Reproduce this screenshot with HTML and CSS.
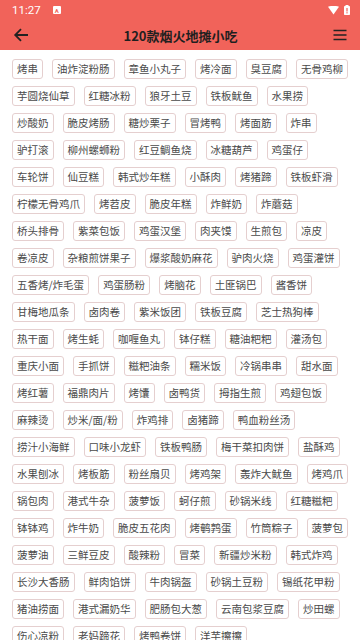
FILE: index.html
```html
<!DOCTYPE html>
<html lang="zh-CN">
<head>
<meta charset="utf-8">
<meta name="viewport" content="width=device-width, initial-scale=1">
<title>120款烟火地摊小吃</title>
<link rel="stylesheet" href="styles.css">
</head>
<body>
<header class="appbar">
  <div class="status">
    <span class="time">11:27</span>
    <span class="notif">A</span>
    <span class="spacer"></span>
    <svg class="wifi" width="11" height="9" viewBox="0 0 11 9"><path d="M0 0.8 Q5.5 -1.2 11 0.8 L5.5 8.5 Z" fill="#fff"/></svg>
    <svg class="batt" width="6" height="10" viewBox="0 0 6 10"><rect x="1.5" y="0" width="3" height="1.2" fill="#fff"/><rect x="0" y="1" width="6" height="9" rx="0.8" fill="#fff"/><rect x="2.4" y="3" width="1.2" height="3.5" fill="#f1635a"/><rect x="2.4" y="7.2" width="1.2" height="1.2" fill="#f1635a"/></svg>
  </div>
  <div class="toolbar">
    <svg class="icon" width="16" height="16" viewBox="0 0 16 16"><path d="M15 8H2.5M8 2.2L2.2 8 8 13.8" stroke="#222" stroke-width="1.8" fill="none"/></svg>
    <h1 class="title">120款烟火地摊小吃</h1>
    <svg class="icon" width="16" height="16" viewBox="0 0 16 16"><path d="M1.5 3.5H14.5M1.5 8H14.5M1.5 12.5H14.5" stroke="#222" stroke-width="1.5" fill="none"/></svg>
  </div>
</header>
<main class="tags" id="tags"></main>
<script src="app.js"></script>
</body>
</html>
```
FILE: styles.css
```css
* { box-sizing: border-box; }
html, body { margin: 0; padding: 0; background: #fff; }
body { font-family: "Noto Sans CJK SC", "Noto Sans", Roboto, sans-serif; }
.appbar { background: #f1635a; color: #fff; }
.status { height: 20px; display: flex; align-items: center; padding: 0 10px 0 12px; gap: 8px; }
.time { font-family: Roboto, "Noto Sans", sans-serif; font-size: 11.5px; color: #fff; }
.notif { width: 8px; height: 8px; background: #fff; color: #f1635a; font-size: 6px; font-weight: bold; font-family: Roboto, sans-serif; display: flex; align-items: center; justify-content: center; border-radius: 1px; margin-left: 4px; }
.spacer { flex: 1; }
.wifi { margin-right: -3px; }
.toolbar { height: 30px; display: flex; align-items: center; padding: 0 12px 0 13px; }
.icon { flex: none; }
.title { flex: 1; margin: 0; text-align: center; font-size: 13px; font-weight: bold; color: #1f1f1f; line-height: 1; }
.tags { display: flex; flex-wrap: wrap; gap: 7px 9px; padding: 9px 10px 12px 12px; }
.tag { height: 20px; padding: 0 4px; border: 1px solid #e5cfcf; border-radius: 3px; font-size: 10.5px; line-height: 18px; color: #4a4a4a; white-space: nowrap; }
```
FILE: app.js
```js
var rows = [
"烤串,油炸淀粉肠,章鱼小丸子,烤冷面,臭豆腐,无骨鸡柳",
"芋圆烧仙草,红糖冰粉,狼牙土豆,铁板鱿鱼,水果捞",
"炒酸奶,脆皮烤肠,糖炒栗子,冒烤鸭,烤面筋,炸串",
"驴打滚,柳州螺蛳粉,红豆鲷鱼烧,冰糖葫芦,鸡蛋仔",
"车轮饼,仙豆糕,韩式炒年糕,小酥肉,烤猪蹄,铁板虾滑",
"柠檬无骨鸡爪,烤苕皮,脆皮年糕,炸鲜奶,炸蘑菇",
"桥头排骨,紫菜包饭,鸡蛋汉堡,肉夹馍,生煎包,凉皮",
"卷凉皮,杂粮煎饼果子,爆浆酸奶麻花,驴肉火烧,鸡蛋灌饼",
"五香烤/炸毛蛋,鸡蛋肠粉,烤脑花,土匪锅巴,酱香饼",
"甘梅地瓜条,卤肉卷,紫米饭团,铁板豆腐,芝士热狗棒",
"热干面,烤生蚝,咖喱鱼丸,钵仔糕,糖油粑粑,灌汤包",
"重庆小面,手抓饼,糍粑油条,糯米饭,冷锅串串,甜水面",
"烤红薯,福鼎肉片,烤馕,卤鸭货,拇指生煎,鸡翅包饭",
"麻辣烫,炒米/面/粉,炸鸡排,卤猪蹄,鸭血粉丝汤",
"捞汁小海鲜,口味小龙虾,铁板鸭肠,梅干菜扣肉饼,盐酥鸡",
"水果刨冰,烤板筋,粉丝扇贝,烤鸡架,轰炸大鱿鱼,烤鸡爪",
"锅包肉,港式牛杂,菠萝饭,蚵仔煎,砂锅米线,红糖糍粑",
"钵钵鸡,炸牛奶,脆皮五花肉,烤鹌鹑蛋,竹筒粽子,菠萝包",
"菠萝油,三鲜豆皮,酸辣粉,冒菜,新疆炒米粉,韩式炸鸡",
"长沙大香肠,鲜肉馅饼,牛肉锅盔,砂锅土豆粉,锡纸花甲粉",
"猪油捞面,港式漏奶华,肥肠包大葱,云南包浆豆腐,炒田螺",
"伤心凉粉,老妈蹄花,烤鸭卷饼,洋芋擦擦"
];
var box = document.getElementById("tags");
rows.join(",").split(",").forEach(function (t) {
  var s = document.createElement("span");
  s.className = "tag";
  s.textContent = t;
  box.appendChild(s);
});
```
